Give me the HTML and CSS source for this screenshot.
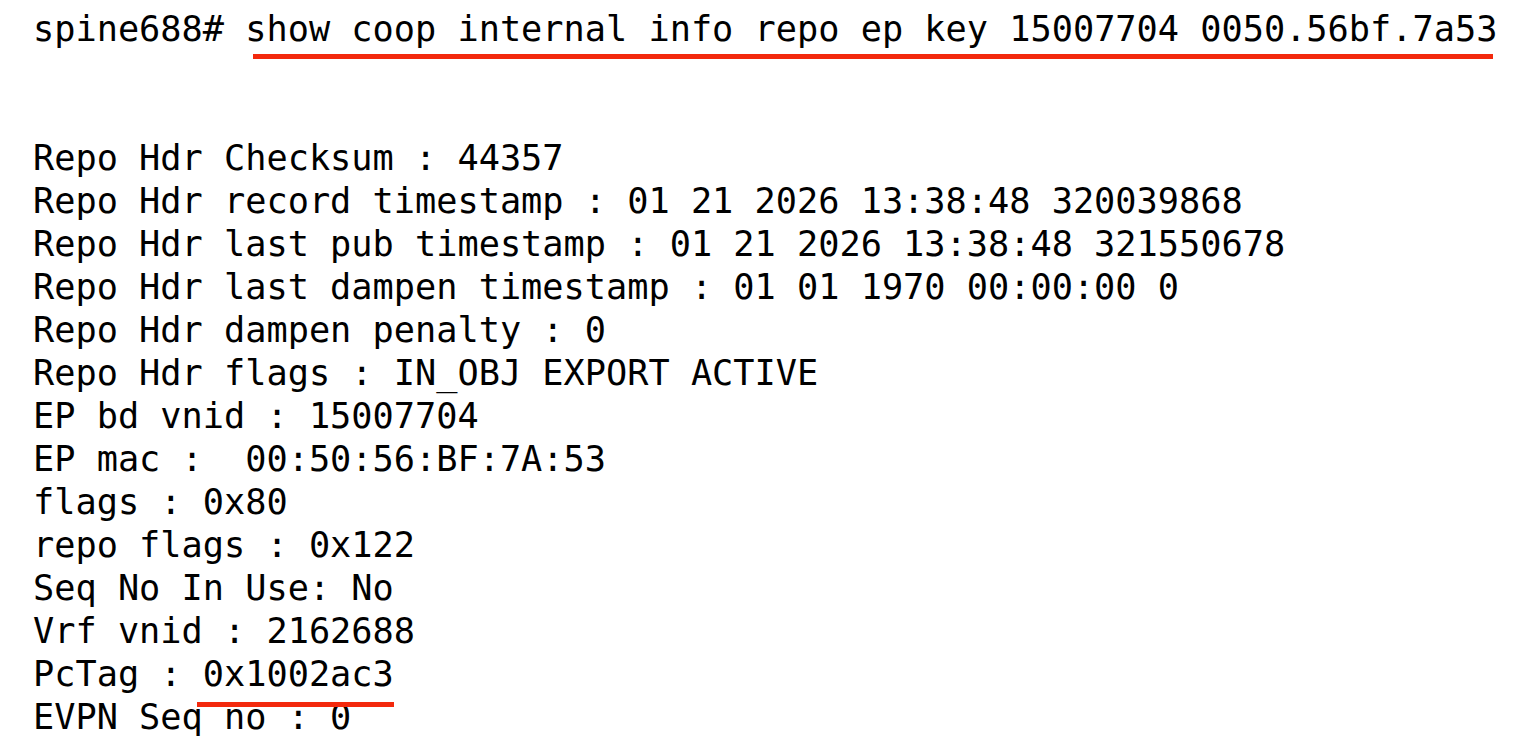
FILE: index.html
```html
<!DOCTYPE html>
<html lang="en">
<head>
<meta charset="utf-8">
<title>coop repo ep</title>
<link rel="stylesheet" href="styles.css">
</head>
<body>
<div class="term">
  <div class="line">spine688# <span class="mark mark-cmd">show coop internal info repo ep key 15007704 0050.56bf.7a53</span></div>
  <div class="line"> </div>
  <div class="line"> </div>
  <div class="line">Repo Hdr Checksum : 44357</div>
  <div class="line">Repo Hdr record timestamp : 01 21 2026 13:38:48 320039868</div>
  <div class="line">Repo Hdr last pub timestamp : 01 21 2026 13:38:48 321550678</div>
  <div class="line">Repo Hdr last dampen timestamp : 01 01 1970 00:00:00 0</div>
  <div class="line">Repo Hdr dampen penalty : 0</div>
  <div class="line">Repo Hdr flags : IN_OBJ EXPORT ACTIVE</div>
  <div class="line">EP bd vnid : 15007704</div>
  <div class="line">EP mac :  00:50:56:BF:7A:53</div>
  <div class="line">flags : 0x80</div>
  <div class="line">repo flags : 0x122</div>
  <div class="line">Seq No In Use: No</div>
  <div class="line">Vrf vnid : 2162688</div>
  <div class="line">PcTag : <span class="mark mark-tag">0x1002ac3</span></div>
  <div class="line">EVPN Seq no : 0</div>
</div>
</body>
</html>
```

FILE: styles.css
```css
html, body {
  margin: 0;
  padding: 0;
  background: #ffffff;
}

body {
  width: 1528px;
  height: 742px;
  overflow: hidden;
}

.term {
  padding: 7px 0 0 33px;
  font-family: "DejaVu Sans Mono", "Liberation Mono", monospace;
  font-size: 35.25px;
  line-height: 43px;
  color: #000000;
}

.line {
  height: 43px;
  white-space: pre;
}

.mark {
  position: relative;
}

.mark::after {
  content: "";
  position: absolute;
  height: 5px;
  background: #f3290d;
}

.mark-cmd::after {
  left: 8px;
  right: 4px;
  top: 46px;
}

.mark-tag::after {
  left: -6px;
  right: 0px;
  top: 49px;
}
```
